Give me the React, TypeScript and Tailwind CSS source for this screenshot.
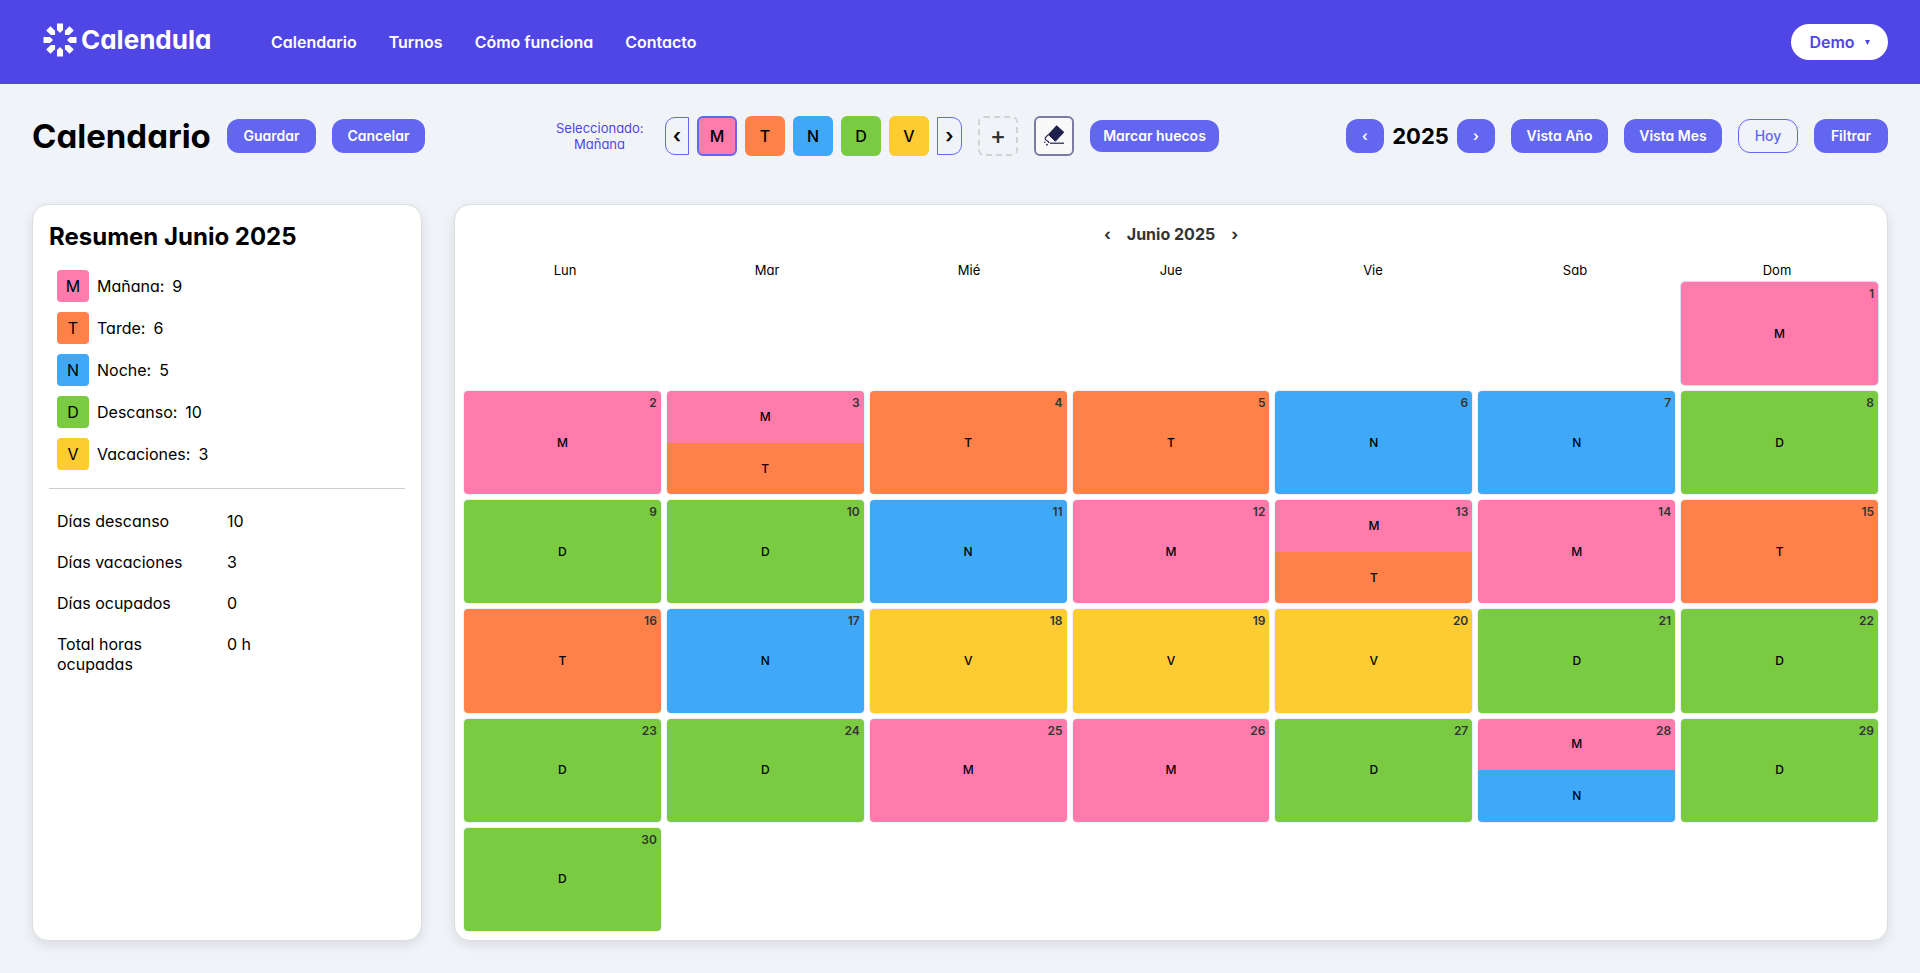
import React from "react";

type Code = "M" | "T" | "N" | "D" | "V";

const shiftColor: Record<Code, string> = {
  M: "bg-[#ff7bac]",
  T: "bg-[#ff814a]",
  N: "bg-[#40a9f7]",
  D: "bg-[#7acb42]",
  V: "bg-[#fdcb32]",
};

const shifts: { code: Code; name: string; count: number }[] = [
  { code: "M", name: "Mañana", count: 9 },
  { code: "T", name: "Tarde", count: 6 },
  { code: "N", name: "Noche", count: 5 },
  { code: "D", name: "Descanso", count: 10 },
  { code: "V", name: "Vacaciones", count: 3 },
];

const totals = [
  ["Días descanso", "10"],
  ["Días vacaciones", "3"],
  ["Días ocupados", "0"],
  ["Total horas ocupadas", "0 h"],
];

const weekdays = ["Lun", "Mar", "Mié", "Jue", "Vie", "Sab", "Dom"];

const days: Code[][] = [
  ["M"], ["M"], ["M", "T"], ["T"], ["T"], ["N"], ["N"], ["D"], ["D"], ["D"],
  ["N"], ["M"], ["M", "T"], ["M"], ["T"], ["T"], ["N"], ["V"], ["V"], ["V"],
  ["D"], ["D"], ["D"], ["D"], ["M"], ["M"], ["D"], ["M", "N"], ["D"], ["D"],
];

const solid =
  "flex items-center justify-center rounded-xl bg-[#6366f1] text-sm font-semibold text-white";

function Logo() {
  return (
    <a href="#" className="flex w-[169px] items-center gap-1 pb-1 text-white">
      <svg viewBox="0 0 34 34" className="size-[34px]" fill="currentColor" aria-hidden="true">
        {[0, 45, 90, 135, 180, 225, 270, 315].map((a) => (
          <path key={a} d="M14 0.5H20V7L17 10L14 7Z" transform={`rotate(${a} 17 17)`} />
        ))}
      </svg>
      <span className="text-[26px] leading-8 font-bold">Calendula</span>
    </a>
  );
}

function Eraser() {
  return (
    <svg viewBox="0 0 24 24" className="size-6" aria-hidden="true">
      <path d="M14.6 1.8 21.8 8.2 13.4 17.2 6.4 10.6Z" fill="#1e1f4b" stroke="#1e1f4b" strokeLinejoin="round" />
      <path d="M6.4 10.6 3.4 13.6Q2.6 15 4.2 16.2Q6.6 17 7.2 19" fill="none" stroke="#1e1f4b" strokeWidth="1.2" />
      <path d="M8 19.2H22" stroke="#1e1f4b" strokeWidth="1.2" />
      <circle cx="2.8" cy="18.3" r="0.8" fill="#1e1f4b" />
      <circle cx="5" cy="20.7" r="0.9" fill="#1e1f4b" />
    </svg>
  );
}

function Header() {
  return (
    <header className="flex h-[84px] items-center bg-[#4f46e5] pr-8 pl-[43px] text-white">
      <Logo />
      <nav className="ml-[59px] flex flex-1 gap-8 font-semibold">
        <a href="#">Calendario</a>
        <a href="#">Turnos</a>
        <a href="#">Cómo funciona</a>
        <a href="#">Contacto</a>
      </nav>
      <button className="flex h-9 w-[97px] items-center justify-center gap-2.5 rounded-full bg-white font-semibold text-[#4f46e5]">
        Demo
        <svg viewBox="0 0 6 6" className="size-[5px]" fill="currentColor" aria-hidden="true">
          <path d="M0 0H6L3 6Z" />
        </svg>
      </button>
    </header>
  );
}

function Toolbar() {
  return (
    <div className="flex h-10 items-center justify-between">
      <div className="flex items-center gap-4">
        <h1 className="w-[179px] text-[33px] leading-10 font-bold">Calendario</h1>
        <button className={`${solid} h-[34px] w-[89px]`}>Guardar</button>
        <button className={`${solid} h-[34px] w-[93px]`}>Cancelar</button>
      </div>
      <div className="flex items-center gap-4 pl-1">
        <p className="mr-1.5 w-[87px] text-center text-[13px] leading-4 text-[#4f46e5]">
          Seleccionado: Mañana
        </p>
        <div className="flex items-center gap-2">
          <button aria-label="Turnos anteriores" className="h-[38px] w-6 rounded-l-[10px] border border-[#6366f1] text-xl leading-5 font-semibold">
            ‹
          </button>
          {shifts.map((s) => (
            <button
              key={s.code}
              className={`${shiftColor[s.code]} size-10 rounded-md font-medium ${s.code === "M" ? "border-2 border-[#6366f1]" : ""}`}
            >
              {s.code}
            </button>
          ))}
          <button aria-label="Turnos siguientes" className="h-[38px] w-[25px] rounded-r-[10px] border border-[#6366f1] text-xl leading-5 font-semibold">
            ›
          </button>
        </div>
        <button aria-label="Añadir turno" className="size-10 rounded-md border-2 border-dashed border-[#d2d2d2] text-2xl leading-6 font-medium text-[#333333]">
          +
        </button>
        <button aria-label="Borrar" className="flex size-10 items-center justify-center rounded-md border-2 border-[#7b7ca5] bg-[#f9f9f9]">
          <Eraser />
        </button>
        <button className={`${solid} h-8 w-[129px]`}>Marcar huecos</button>
      </div>
      <div className="flex items-center gap-4">
        <div className="flex items-center gap-2">
          <button aria-label="Año anterior" className={`${solid} h-[34px] w-[38px]`}>‹</button>
          <span className="w-[57px] text-center text-[22px] font-bold">2025</span>
          <button aria-label="Año siguiente" className={`${solid} h-[34px] w-[38px]`}>›</button>
        </div>
        <button className={`${solid} h-[34px] w-[97px]`}>Vista Año</button>
        <button className={`${solid} h-[34px] w-[98px]`}>Vista Mes</button>
        <button className="h-[34px] w-[60px] rounded-xl border border-[#6366f1] text-sm font-medium text-[#6366f1]">
          Hoy
        </button>
        <button className={`${solid} h-[34px] w-[74px]`}>Filtrar</button>
      </div>
    </div>
  );
}

const card = "rounded-2xl border border-[#dddddd] bg-white shadow-[0_4px_12px_rgba(0,0,0,0.1)]";

function Summary() {
  return (
    <aside className={`${card} w-[390px] shrink-0 p-4`}>
      <h2 className="text-2xl leading-8 font-bold">Resumen Junio 2025</h2>
      <ul className="mt-[17px] flex flex-col gap-2.5 px-2">
        {shifts.map((s) => (
          <li key={s.code} className="flex items-center gap-2 text-base">
            <span className={`${shiftColor[s.code]} flex size-8 items-center justify-center rounded`}>
              {s.code}
            </span>
            <span>{s.name}:</span>
            <span>{s.count}</span>
          </li>
        ))}
      </ul>
      <hr className="mt-[18px] border-[#cccccc]" />
      <dl className="mt-[22px] flex flex-col gap-[21px] px-2 leading-5">
        {totals.map(([k, v]) => (
          <div key={k} className="flex">
            <dt className="w-[130px]">{k}</dt>
            <dd className="ml-10">{v}</dd>
          </div>
        ))}
      </dl>
    </aside>
  );
}

function Day({ day, codes }: { day: number; codes: Code[] }) {
  return (
    <button
      className={`relative flex flex-col overflow-hidden rounded text-xs font-medium ring-1 ${day === 1 ? "col-start-7 ring-[#d9dafc]" : "ring-[#edf1f5]"}`}
    >
      {codes.map((c) => (
        <span key={c} className={`${shiftColor[c]} flex w-full flex-1 items-center justify-center`}>
          {c}
        </span>
      ))}
      <span className="absolute top-1 right-1 leading-4 font-semibold text-[#333333]">{day}</span>
    </button>
  );
}

function Calendar() {
  return (
    <main className={`${card} flex flex-1 flex-col px-[9px] pt-[15px] pb-[9px]`}>
      <div className="flex items-center justify-center gap-4 leading-7 font-bold text-[#333333]">
        <button aria-label="Mes anterior">‹</button>
        <h2>Junio 2025</h2>
        <button aria-label="Mes siguiente">›</button>
      </div>
      <div className="mt-3 mb-[2px] grid grid-cols-7 text-center text-[13px] leading-5">
        {weekdays.map((w) => (
          <span key={w}>{w}</span>
        ))}
      </div>
      <div className="grid flex-1 auto-rows-fr grid-cols-7 gap-1.5">
        {days.map((codes, i) => (
          <Day key={i} day={i + 1} codes={codes} />
        ))}
      </div>
    </main>
  );
}

export default function App() {
  return (
    <div className="flex min-h-screen flex-col bg-[#f0f4f9] font-['Inter','Noto_Sans',sans-serif] text-black [font-feature-settings:'cv11']">
      <Header />
      <div className="flex flex-1 flex-col gap-12 px-8 py-8">
        <Toolbar />
        <div className="flex flex-1 gap-8">
          <Summary />
          <Calendar />
        </div>
      </div>
    </div>
  );
}
